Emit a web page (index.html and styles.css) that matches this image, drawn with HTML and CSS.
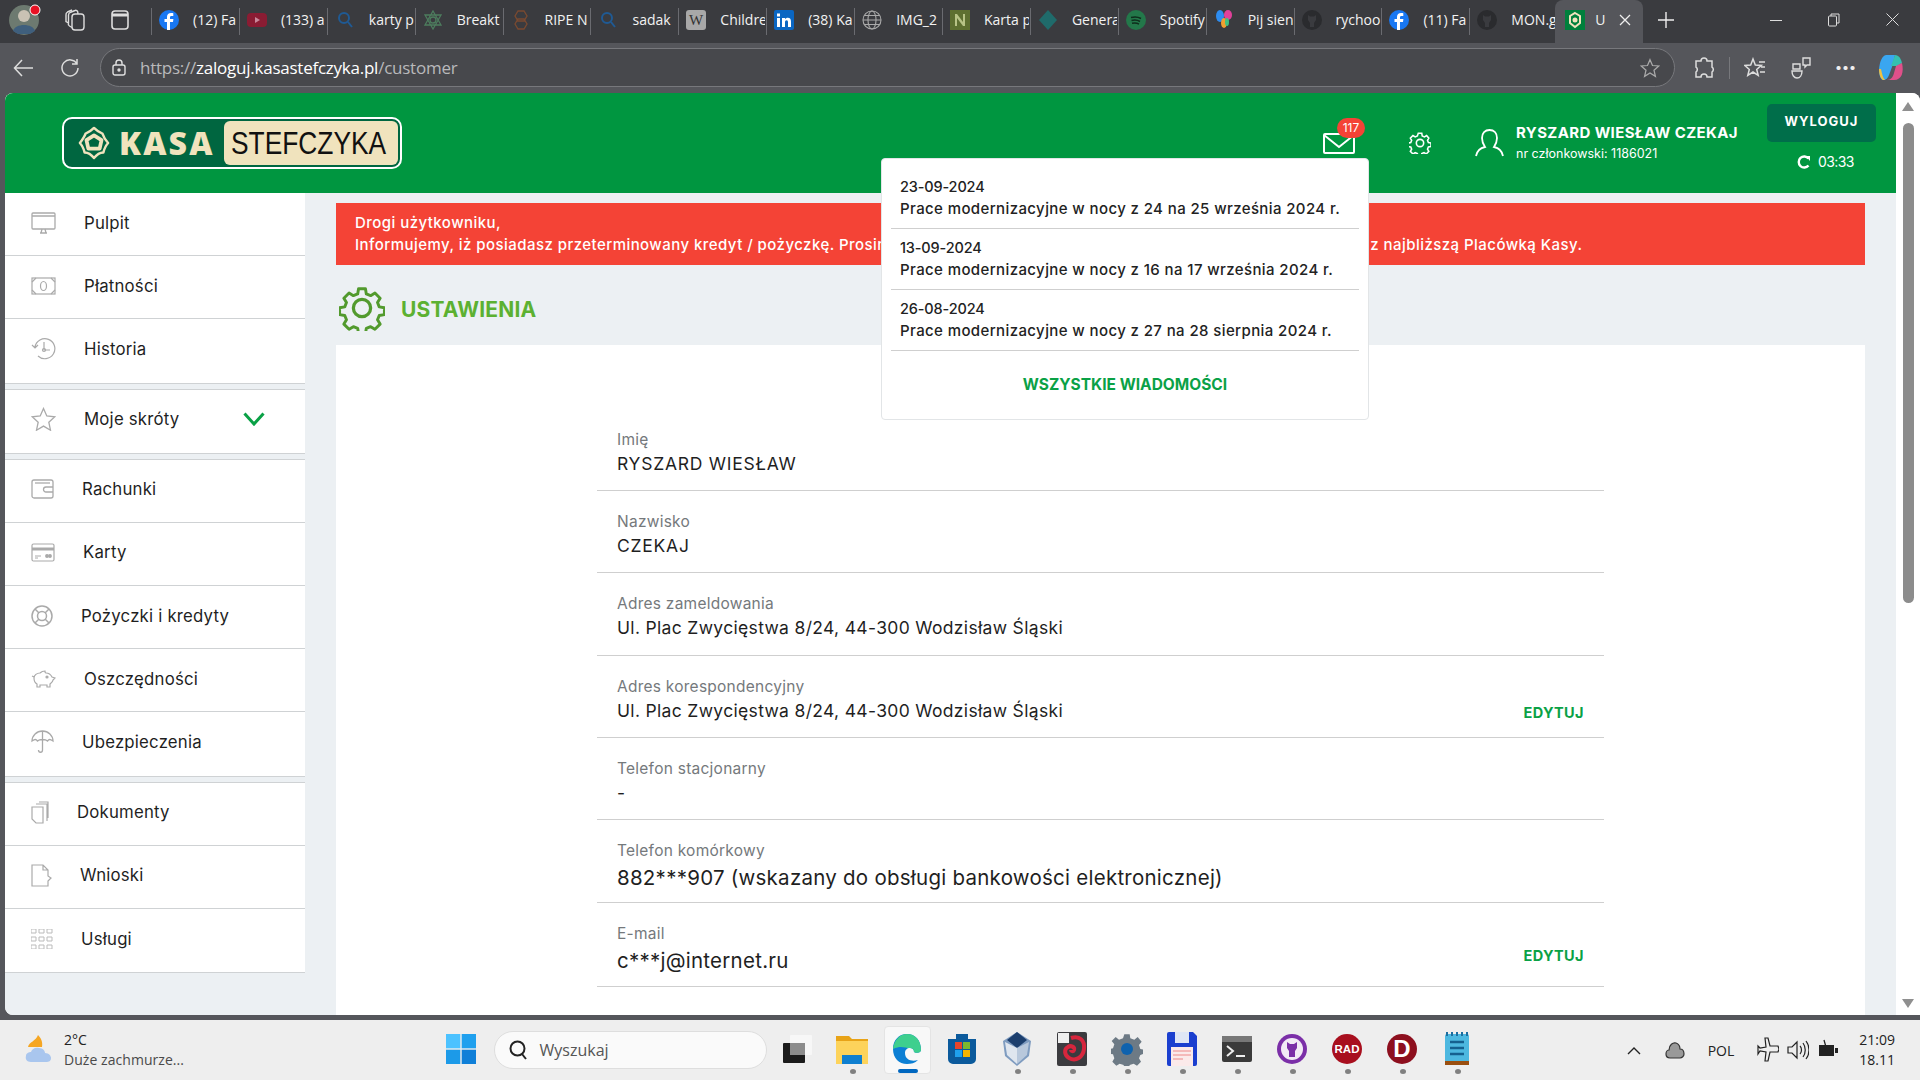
FILE: index.html
```html
<!DOCTYPE html>
<html lang="pl">
<head>
<meta charset="utf-8">
<title>Ustawienia</title>
<link rel="stylesheet" href="styles.css">
</head>
<body>
<div class="tabstrip">
  <div class="strip-btn avatar-box">
    <svg width="32" height="32" viewBox="0 0 32 32"><circle cx="15" cy="16" r="15" fill="#6d7a70"/><circle cx="15" cy="12" r="6" fill="#c9c2b4"/><path d="M4 27c2-8 20-8 22 0l-5 3H9z" fill="#3f5f7d"/><circle cx="26" cy="6" r="5" fill="#e81123" stroke="#fff" stroke-width="1"/></svg>
  </div>
  <div class="strip-btn btn-wide">
    <svg width="22" height="24" viewBox="0 0 22 24" fill="none" stroke="#ddd" stroke-width="1.400"><rect x="8" y="6" width="12" height="16" rx="3"/><path d="M8 19.500 5.500 18A2.500 2.500 0 0 1 4.500 15V7a3 3 0 0 1 1.500-2.500L11 2.500a2 2 0 0 1 2.800 1.500V6"/><path d="M4.500 15 2 13.500V7A3 3 0 0 1 3.500 4L8 2"/></svg>
  </div>
  <div class="strip-btn btn-narrow">
    <svg width="20" height="22" viewBox="0 0 20 22" fill="none" stroke="#ddd" stroke-width="1.600"><rect x="2" y="2" width="16" height="18" rx="3"/><path d="M2 6h16" stroke-width="3"/></svg>
  </div>
  <div class="tabs">
    <div class="tab"><svg class="fav" viewBox="0 0 20 20"><circle cx="10" cy="10" r="10" fill="#1877f2"/><path d="M11 20v-8h3l.4-3H11V7.400c0-1 .4-1.500 1.600-1.500h1.700V3.200C13.800 3.100 13 3 12.100 3 9.600 3 8 4.500 8 7v2H5.500v3H8v8z" fill="#fff"/></svg><span class="tab-text">(12) Fa</span></div>
    <div class="tab"><svg class="fav" viewBox="0 0 20 20"><rect y="3" width="20" height="14" rx="4" fill="#8a1c33"/><path d="M8 7l5 3-5 3z" fill="#c8889a"/></svg><span class="tab-text">(133) a</span></div>
    <div class="tab"><svg class="fav" viewBox="0 0 20 20" fill="none" stroke="#1f5a94" stroke-width="2"><circle cx="9" cy="8" r="5"/><path d="M13 12l4 5"/></svg><span class="tab-text">karty p</span></div>
    <div class="tab"><svg class="fav" viewBox="0 0 20 20" fill="none" stroke="#4d7d5e" stroke-width="1.300"><path d="M10 1l8 14H2zM10 19L2 5h16z"/><circle cx="10" cy="10" r="3"/></svg><span class="tab-text">Breakt</span></div>
    <div class="tab"><svg class="fav" viewBox="0 0 20 20" fill="none" stroke="#7a4a30" stroke-width="1.300"><path d="M7 1h6l3 5-3 5H7L4 6zM7 9h6l3 5-3 5H7l-3-5z"/></svg><span class="tab-text">RIPE N</span></div>
    <div class="tab"><svg class="fav" viewBox="0 0 20 20" fill="none" stroke="#1f5a94" stroke-width="2"><circle cx="9" cy="8" r="5"/><path d="M13 12l4 5"/></svg><span class="tab-text">sadak</span></div>
    <div class="tab"><svg class="fav" viewBox="0 0 20 20"><rect width="20" height="20" rx="3" fill="#a8a8a8"/><text x="10" y="15" text-anchor="middle" class="fav-w">W</text></svg><span class="tab-text">Childre</span></div>
    <div class="tab"><svg class="fav" viewBox="0 0 20 20"><rect width="20" height="20" rx="2" fill="#0a66c2"/><path d="M3 8h3v9H3zM3 3.500h3v3H3zM8 8h3v1.300c.6-1 1.600-1.500 2.800-1.500 2.300 0 3.200 1.500 3.200 4V17h-3v-4.700c0-1.300-.4-2-1.400-2-1.100 0-1.600.8-1.600 2V17H8z" fill="#fff"/></svg><span class="tab-text">(38) Ka</span></div>
    <div class="tab"><svg class="fav" viewBox="0 0 20 20" fill="none" stroke="#aaa" stroke-width="1.100"><circle cx="10" cy="10" r="9"/><ellipse cx="10" cy="10" rx="4" ry="9"/><path d="M1 10h18M2.500 5.500h15M2.500 14.500h15"/></svg><span class="tab-text">IMG_2</span></div>
    <div class="tab"><svg class="fav" viewBox="0 0 20 20"><rect width="20" height="20" fill="#5e7030"/><path d="M5 16V4h2l6 8V4h2v12h-2L7 8v8z" fill="#b8c486"/></svg><span class="tab-text">Karta p</span></div>
    <div class="tab"><svg class="fav" viewBox="0 0 20 20"><path d="M10 0l9 10-9 10-9-10z" fill="#1f6b6b"/></svg><span class="tab-text">Genera</span></div>
    <div class="tab"><svg class="fav" viewBox="0 0 20 20"><circle cx="10" cy="10" r="10" fill="#23784a"/><path d="M5 7.500c4-1 7-.7 10 1M5.500 10.500c3.500-.8 6-.5 8.500 1M6 13.300c3-.6 5-.4 7 .8" fill="none" stroke="#0e2e1c" stroke-width="1.500"/></svg><span class="tab-text">Spotify</span></div>
    <div class="tab"><svg class="fav" viewBox="0 0 20 20"><ellipse cx="6" cy="6" rx="4" ry="6" fill="#2d8cf0"/><ellipse cx="14" cy="5" rx="4" ry="5" fill="#e0409a"/><ellipse cx="10" cy="13" rx="3" ry="5" fill="#f0a030"/><ellipse cx="13" cy="12" rx="2" ry="4" fill="#40c080"/></svg><span class="tab-text">Pij sien</span></div>
    <div class="tab"><svg class="fav" viewBox="0 0 20 20"><circle cx="10" cy="10" r="10" fill="#2a2b2e"/><path d="M6 5l2 1.500h4L14 5v5l-2 3v4H8v-4l-2-3z" fill="#3a3b3f"/></svg><span class="tab-text">rychoo</span></div>
    <div class="tab"><svg class="fav" viewBox="0 0 20 20"><circle cx="10" cy="10" r="10" fill="#1877f2"/><path d="M11 20v-8h3l.4-3H11V7.400c0-1 .4-1.500 1.600-1.500h1.700V3.200C13.800 3.100 13 3 12.100 3 9.600 3 8 4.500 8 7v2H5.500v3H8v8z" fill="#fff"/></svg><span class="tab-text">(11) Fa</span></div>
    <div class="tab"><svg class="fav" viewBox="0 0 20 20"><circle cx="10" cy="10" r="10" fill="#2a2b2e"/><path d="M6 5l2 1.500h4L14 5v5l-2 3v4H8v-4l-2-3z" fill="#3a3b3f"/></svg><span class="tab-text">MON.g</span></div>
    <div class="tab tab-active"><svg class="fav" viewBox="0 0 20 20"><rect width="20" height="20" fill="#00803c"/><path d="M10 3l5 3v7l-5 4-5-4V6z" fill="none" stroke="#f0e3bd" stroke-width="2"/><circle cx="10" cy="10" r="2.500" fill="#f0e3bd"/></svg><span class="tab-text tab-text-short">U</span><svg class="tab-x" width="12" height="12" viewBox="0 0 12 12" stroke="#eee" stroke-width="1.300"><path d="M1 1l10 10M11 1 1 11"/></svg></div>
  </div>
  <svg class="tab-plus" width="16" height="16" viewBox="0 0 16 16" stroke="#eee" stroke-width="1.400"><path d="M8 0v16M0 8h16"/></svg>
  <div class="win-controls">
    <svg width="12" height="12" viewBox="0 0 12 12" stroke="#ddd"><path d="M0 6.500h12"/></svg>
    <svg width="12" height="14" viewBox="0 0 12 14" fill="none" stroke="#ddd"><rect x=".5" y="3" width="8" height="10" rx="1"/><path d="M3 3V1h8v9H9"/></svg>
    <svg width="13" height="13" viewBox="0 0 13 13" stroke="#ddd"><path d="M.5.500l12 12M12.500.500l-12 12"/></svg>
  </div>
</div>

<div class="toolbar">
  <div class="tool-btn"><svg width="20" height="18" viewBox="0 0 20 18" fill="none" stroke="#ddd" stroke-width="1.500"><path d="M20 9H2M9 1 1.500 9 9 17"/></svg></div>
  <div class="tool-btn"><svg width="20" height="20" viewBox="0 0 20 20" fill="none" stroke="#ddd" stroke-width="1.500"><path d="M17 6a8 8 0 1 0 1 4M17 1v5h-5"/></svg></div>
  <div class="address">
    <span class="lock"><svg width="14" height="17" viewBox="0 0 14 17" fill="none" stroke="#e0e0e0" stroke-width="1.400"><rect x="1" y="6" width="12" height="10" rx="2"/><path d="M4 6V4a3 3 0 0 1 6 0v2"/><circle cx="7" cy="11" r="1" fill="#e0e0e0"/></svg></span>
    <span class="url"><span class="url-dim">https://</span>zaloguj.kasastefczyka.pl<span class="url-dim">/customer</span></span>
    <svg class="addr-star" width="20" height="20" viewBox="0 0 24 24" fill="none" stroke="#aaa" stroke-width="1.500"><path d="M12 2l3 7 7.500.6-5.700 5 1.700 7.400L12 18l-6.500 4 1.700-7.400-5.700-5L9 9z"/></svg>
  </div>
  <div class="tool-right">
    <div class="tool-ic"><svg width="22" height="22" viewBox="0 0 22 22" fill="none" stroke="#ddd" stroke-width="1.500"><path d="M8 4a3 3 0 0 1 6 0h5v6a3 3 0 0 1 0 5v5h-5a3 3 0 0 0-6 0H3v-5a3 3 0 0 0 0-5V4z"/></svg></div>
    <span class="tool-sep"></span>
    <div class="tool-ic"><svg width="22" height="22" viewBox="0 0 22 22" fill="none" stroke="#ddd" stroke-width="1.500"><path d="M9 2l2.300 6 6 .4-4.600 4 1.500 6L9 15l-5.200 3.400 1.500-6-4.600-4 6-.4zM15 5h6M17 10h4M16 15h5"/></svg></div>
    <div class="tool-ic"><svg width="22" height="24" viewBox="0 0 22 24" fill="none" stroke="#ddd" stroke-width="1.400"><path d="M13 2h7v7h-3l-2 2V9h-2zM3 8h7v5H3zM2 15h10c0 4-2 7-5 7s-5-3-5-7z"/></svg></div>
    <div class="tool-ic tool-dots">&#183;&#183;&#183;</div>
    <div class="tool-ic"><svg width="26" height="28" viewBox="0 0 26 28"><path d="M8 1h9l-3 12-3 8c-1 3-3 5-6 5C3 26 1 22 1 15 2 7 4 2 8 1z" fill="#3aa6f0"/><path d="M17 1c4 0 6 4 7 8l-5 3h-6z" fill="#35c0b0"/><path d="M24 9c2 9 0 17-8 17H9c4 0 6-3 7-7l2-7z" fill="#e0508a"/><path d="M3 15c1 5 2 9 4 11H5C2 24 1 19 1 15z" fill="#f0c040"/></svg></div>
  </div>
</div>

<div class="browser">
  <div class="page">
    <div class="app">
      <header class="header">
        <div class="logo">
          <div class="logo-dark">
            <svg class="logo-mark" width="32" height="34" viewBox="0 0 34 36" fill="none" stroke="#f0e3bd" stroke-width="2.600" stroke-linejoin="round"><path d="M17 2c3 3 6 5 9 6 1 3 2 6 6 10-3 3-4 6-5 10-4 0-7 2-10 6-3-4-6-6-10-6-1-4-2-7-5-10 3-4 5-7 6-10 3-1 6-3 9-6z"/><path d="M17 10l8 5-2 9h-12l-2-9z" stroke-width="4"/></svg>
            <span class="logo-kasa">KASA</span>
          </div>
          <div class="logo-light"><span class="logo-stef">STEFCZYKA</span></div>
        </div>
        <div class="head-right">
          <div class="mail">
            <svg width="32" height="21" viewBox="0 0 32 21" fill="none" stroke="#fff" stroke-width="2"><rect x="1" y="1" width="30" height="19" rx="1"/><path d="M1 2l15 12L31 2"/></svg>
            <span class="badge">117</span>
          </div>
          <svg class="head-gear" width="22" height="22" viewBox="0 0 48 48" fill="none" stroke="#fff" stroke-width="3.500"><path d="M20 3h8l1 6 5 2 5-3 5 6-3 5 2 5 6 1v8l-6 1-2 5 3 5-6 6-5-3-5 2-1 6h-8l-1-6-5-2-5 3-6-6 3-5-2-5-6-1v-8l6-1 2-5-3-5 6-6 5 3 5-2z" transform="translate(1 0) scale(.96)"/><circle cx="24" cy="24" r="8"/></svg>
          <svg class="head-user" width="29" height="28" viewBox="0 0 29 28" fill="none" stroke="#fff" stroke-width="1.800"><path d="M1 27c1-5 4-8 9-9-2-3-3-6-3-9 0-5 3-8 7.500-8S22 4 22 9c0 3-1 6-3 9 5 1 8 4 9 9"/></svg>
          <div class="user-info">
            <div class="user-name">RYSZARD WIESŁAW CZEKAJ</div>
            <div class="user-no">nr członkowski: 1186021</div>
          </div>
          <div class="session">
            <div class="logout">WYLOGUJ</div>
            <div class="timer"><svg width="14" height="14" viewBox="0 0 14 14" fill="none" stroke="#fff" stroke-width="2.400"><path d="M11.500 3.500a5.500 5.500 0 1 0 0 7"/><path d="M9 1l4 0 0 5z" fill="#fff" stroke="none"/></svg><span>03:33</span></div>
          </div>
        </div>
        <div class="popup">
          <div class="msg"><div class="msg-date">23-09-2024</div><div>Prace modernizacyjne w nocy z 24 na 25 września 2024 r.</div></div>
          <div class="msg"><div class="msg-date">13-09-2024</div><div>Prace modernizacyjne w nocy z 16 na 17 września 2024 r.</div></div>
          <div class="msg"><div class="msg-date">26-08-2024</div><div>Prace modernizacyjne w nocy z 27 na 28 sierpnia 2024 r.</div></div>
          <div class="popup-all">WSZYSTKIE WIADOMOŚCI</div>
        </div>
      </header>
      <div class="body-row">
        <nav class="sidebar">
          <div class="nav-group">
            <div class="nav-item"><svg width="25" height="22" viewBox="0 0 25 22" fill="none" stroke="#aaa" stroke-width="1.300"><rect x="1" y="1" width="23" height="16" rx="1"/><path d="M1 4h23M9 21h7M11 17l-1 4M14 17l1 4" /></svg><span>Pulpit</span></div>
            <div class="nav-item"><svg width="25" height="18" viewBox="0 0 25 18" fill="none" stroke="#aaa" stroke-width="1.200"><rect x="1" y="1" width="23" height="16"/><path d="M1 5l4-4M20 1l4 4M1 13l4 4M24 13l-4 4"/><ellipse cx="12.500" cy="9" rx="3" ry="4.500"/></svg><span>Płatności</span></div>
            <div class="nav-item"><svg width="25" height="22" viewBox="0 0 25 22" fill="none" stroke="#aaa" stroke-width="1.200"><path d="M4 9a10 10 0 1 1 3 9M1 7l3 3 3-3M13 4v8h6"/><circle cx="13" cy="12" r="1.500"/></svg><span>Historia</span></div>
          </div>
          <div class="nav-group">
            <div class="nav-item nav-expand"><svg width="25" height="24" viewBox="0 0 25 24" fill="none" stroke="#aaa" stroke-width="1.300"><path d="M12.500 1.500l3.300 7.500 8 .8-6 5.400 1.700 8-7-4.100-7 4.100 1.700-8-6-5.400 8-.8z"/></svg><span>Moje skróty</span><svg class="chevron" width="22" height="14" viewBox="0 0 22 14" fill="none" stroke="#0aa146" stroke-width="3"><path d="M1.500 1.500 11 12l9.500-10.500"/></svg></div>
          </div>
          <div class="nav-group">
            <div class="nav-item"><svg width="23" height="20" viewBox="0 0 23 20" fill="none" stroke="#aaa" stroke-width="1.300"><path d="M3 1h17a2 2 0 0 1 2 2v14a2 2 0 0 1-2 2H3a2 2 0 0 1-2-2V3a2 2 0 0 1 2-2zM22 8h-7a2 2 0 0 0 0 5h7"/><path d="M4 4h15"/></svg><span>Rachunki</span></div>
            <div class="nav-item"><svg width="24" height="19" viewBox="0 0 24 19" fill="none" stroke="#aaa" stroke-width="1.200"><rect x="1" y="1" width="22" height="17" rx="1.500"/><path d="M1 6h22" stroke-width="3"/><path d="M4 13h6M4 15h3" stroke-width="1"/><circle cx="16" cy="13" r="1.300" fill="#aaa"/><circle cx="19" cy="13" r="1.300" fill="#aaa"/></svg><span>Karty</span></div>
            <div class="nav-item"><svg width="22" height="22" viewBox="0 0 22 22" fill="none" stroke="#aaa" stroke-width="1.500"><circle cx="11" cy="11" r="10"/><circle cx="11" cy="11" r="4.500"/><path d="M4 4l4 4M18 4l-4 4M4 18l4-4M18 18l-4-4"/></svg><span>Pożyczki i kredyty</span></div>
            <div class="nav-item"><svg width="25" height="21" viewBox="0 0 25 21" fill="none" stroke="#aaa" stroke-width="1.200"><path d="M3 10c0-3 3-5 6-5 1-1 3-2 5-2 0 1 0 2 1 2 3 0 5 2 6 4l3 1-2 2c0 2-2 3-3 4v3h-3v-2H9v2H6v-3c-2-1-3-3-3-6zM3 9 1 8"/><circle cx="16" cy="9" r="1" fill="#aaa"/></svg><span>Oszczędności</span></div>
            <div class="nav-item"><svg width="23" height="24" viewBox="0 0 23 24" fill="none" stroke="#aaa" stroke-width="1.300"><path d="M1 11a10.500 10 0 0 1 21 0c-3-2-4-2-5.500 0-2-2-8-2-10 0C5 9 4 9 1 11zM11.500 1v19c0 3-4 3-4 0"/></svg><span>Ubezpieczenia</span></div>
          </div>
          <div class="nav-group">
            <div class="nav-item"><svg width="18" height="23" viewBox="0 0 18 23" fill="none" stroke="#aaa" stroke-width="1.200"><path d="M1 6h11v16H5l-4-4zM5 3h11v17M8 1h9v16"/></svg><span>Dokumenty</span></div>
            <div class="nav-item"><svg width="21" height="23" viewBox="0 0 21 23" fill="none" stroke="#aaa" stroke-width="1.200"><path d="M1 1h11l5 5v6l3 2-3 3v5H1zM12 1v5h5"/></svg><span>Wnioski</span></div>
            <div class="nav-item"><svg width="22" height="20" viewBox="0 0 22 20"><path d="M0 0h5v4H0zM8 0h5v4H8zM16 0h5v4h-5zM0 8h5v4H0zM8 8h5v4H8zM16 8h5v4h-5zM0 16h5v4H0zM8 16h5v4H8zM16 16h5v4h-5z" fill="none" stroke="#bbb"/></svg><span>Usługi</span></div>
          </div>
        </nav>
        <main class="main">
          <div class="alert">
            <div>Drogi użytkowniku,</div>
            <div>Informujemy, iż posiadasz przeterminowany kredyt / pożyczkę. Prosimy o szybkie uregulowanie zaległości lub o bezpośredni kontakt z najbliższą Placówką Kasy.</div>
          </div>
          <div class="page-title">
            <svg width="46" height="46" viewBox="0 0 48 48" fill="none" stroke="#529a2d" stroke-width="3.400" stroke-linejoin="round"><path d="M20 3h8l1 6 5 2 5-3 6 6-3 5 2 5 6 1v8l-6 1-2 5 3 5-6 6-5-3-5 2-1 6h-8l-1-6-5-2-5 3-6-6 3-5-2-5-6-1v-8l6-1 2-5-3-5 6-6 5 3 5-2z" transform="translate(2.400 1.200) scale(.9)"/><circle cx="24" cy="24" r="9"/></svg>
            <h1>USTAWIENIA</h1>
          </div>
          <section class="card">
            <div class="row"><div><div class="row-label">Imię</div><div class="row-value row-caps">RYSZARD WIESŁAW</div></div></div>
            <div class="row"><div><div class="row-label">Nazwisko</div><div class="row-value row-caps">CZEKAJ</div></div></div>
            <div class="row"><div><div class="row-label">Adres zameldowania</div><div class="row-value">Ul. Plac Zwycięstwa 8/24, 44-300 Wodzisław Śląski</div></div></div>
            <div class="row"><div><div class="row-label">Adres korespondencyjny</div><div class="row-value">Ul. Plac Zwycięstwa 8/24, 44-300 Wodzisław Śląski</div></div><span class="row-edit">EDYTUJ</span></div>
            <div class="row"><div><div class="row-label">Telefon stacjonarny</div><div class="row-value">-</div></div></div>
            <div class="row row-big"><div><div class="row-label">Telefon komórkowy</div><div class="row-value">882***907 (wskazany do obsługi bankowości elektronicznej)</div></div></div>
            <div class="row row-big"><div><div class="row-label">E-mail</div><div class="row-value">c***j@internet.ru</div></div><span class="row-edit">EDYTUJ</span></div>
          </section>
        </main>
      </div>
    </div>
    <div class="scrollbar">
      <span class="arrow-up"></span>
      <span class="thumb"></span>
      <span class="arrow-down"></span>
    </div>
  </div>
</div>

<footer class="taskbar">
  <div class="weather">
    <svg width="32" height="32" viewBox="0 0 32 32"><path d="M14 1c3 3 5 7 4 12H4C5 8 12 7 14 1z" fill="#f5a623"/><path d="M7 28c-4 0-6-3-5-6 0-3 3-4 5-4 1-3 4-5 8-4 4 0 6 3 6 5 4 0 6 3 6 5 0 3-2 4-5 4z" fill="#a9c6ee"/></svg>
    <div class="weather-text"><div>2°C</div><div class="weather-sub">Duże zachmurze...</div></div>
  </div>
  <div class="task-center">
    <div class="task-ic"><svg width="30" height="30" viewBox="0 0 30 30"><rect width="14.300" height="14.300" fill="#4cc2ff"/><rect x="15.700" width="14.300" height="14.300" fill="#1fa0ee"/><rect y="15.700" width="14.300" height="14.300" fill="#1c9ae8"/><rect x="15.700" y="15.700" width="14.300" height="14.300" fill="#0f7fd8"/></svg></div>
    <div class="search">
      <svg width="19" height="20" viewBox="0 0 19 20" fill="none" stroke="#222" stroke-width="2"><circle cx="8.500" cy="8.500" r="7"/><path d="M13 14l4 5"/></svg>
      <span>Wyszukaj</span>
    </div>
    <div class="task-ic"><svg width="30" height="30" viewBox="0 0 30 30"><rect x="1" y="9" width="22" height="20" rx="1" fill="#1b1b1b"/><rect x="8" y="1" width="22" height="20" rx="1" fill="#f7f7f7"/><rect x="8" y="9" width="15" height="12" fill="#8c8c8c"/></svg></div>
    <div class="task-ic run"><svg width="32" height="30" viewBox="0 0 32 30"><path d="M0 2h13l3 3h16v25H0z" fill="#e8a317"/><rect y="7" width="32" height="23" fill="#fdd35b"/><rect x="6" y="21" width="20" height="9" fill="#0f7fd0"/></svg></div>
    <div class="task-ic task-active"><svg width="30" height="32" viewBox="0 0 30 32"><path d="M29 17C29 7 23 1 15 1 7 1 1 7 1 16c0 9 6 15 14 15 4 0 8-1 11-4-6 2-13 0-13-7 0-3 2-5 5-5 2 0 4 1 4 4 4 2 7 0 7-2z" fill="#0c7fd4"/><path d="M1 16C2 7 8 1 15 1c8 0 14 6 14 16 0 2-3 4-7 2 0-3-2-4-4-4-5 0-9-3-17 1z" fill="#3ecf8e"/></svg><span class="active-bar"></span></div>
    <div class="task-ic"><svg width="30" height="30" viewBox="0 0 30 30"><path d="M9 0h12v5h8v20a5 5 0 0 1-5 5H6a5 5 0 0 1-5-5V5h8z" fill="#0b5a9c"/><rect x="8" y="8" width="7" height="7" fill="#e8452b"/><rect x="16" y="8" width="7" height="7" fill="#7cb82f"/><rect x="8" y="16" width="7" height="7" fill="#1fa0ee"/><rect x="16" y="16" width="7" height="7" fill="#f5b400"/></svg></div>
    <div class="task-ic run"><svg width="28" height="34" viewBox="0 0 28 34"><path d="M14 0l14 9-2 15-12 10L2 24 0 9z" fill="#7f9cc0"/><path d="M14 0l10 8-10 8L4 8z" fill="#1c3f6e"/><path d="M14 16v16L4 23 2 10z" fill="#dfe6ef"/><path d="M14 16v16l10-9 2-13z" fill="#b8c8dc"/></svg></div>
    <div class="task-ic run"><svg width="30" height="34" viewBox="0 0 30 34"><rect width="30" height="34" rx="2" fill="#3b3b3f"/><rect x="1" y="1" width="11" height="10" fill="#eee"/><path d="M14 6c9-3 14 3 13 11s-8 13-15 9c-5-3-5-9-1-11 3-2 7 0 6 3-1 2-3 1-3 0" fill="none" stroke="#d7263d" stroke-width="4"/></svg></div>
    <div class="task-ic run"><svg width="32" height="34" viewBox="0 0 48 48" fill="#6d7a85"><path d="M20 2h8l1 6 6 2 5-4 6 7-4 5 2 6 6 1v6l-6 2-2 5 3 5-6 6-5-3-6 2-1 5h-7l-1-5-6-2-5 3-6-6 3-5-2-6-6-1v-7l6-1 2-6-4-5 6-6 5 4 6-2z"/><circle cx="24" cy="24" r="9" fill="#0f62ae"/></svg></div>
    <div class="task-ic run"><svg width="30" height="34" viewBox="0 0 30 34"><path d="M0 2a2 2 0 0 1 2-2h24l4 4v28a2 2 0 0 1-2 2H2a2 2 0 0 1-2-2z" fill="#1b3fcf"/><rect x="8" y="0" width="14" height="11" fill="#dfe6f5"/><rect x="4" y="15" width="22" height="19" fill="#fbeaea"/><path d="M6 19h18M6 23h18M6 27h10" stroke="#e88"/></svg></div>
    <div class="task-ic run"><svg width="30" height="26" viewBox="0 0 30 26"><rect width="30" height="26" rx="2" fill="#3a3a3a"/><rect width="30" height="6" fill="#777"/><path d="M5 10l6 5-6 5" fill="none" stroke="#eee" stroke-width="2"/><path d="M14 20h9" stroke="#eee" stroke-width="2"/></svg></div>
    <div class="task-ic run"><svg width="30" height="30" viewBox="0 0 30 30"><circle cx="15" cy="15" r="15" fill="#7b2fa8"/><circle cx="15" cy="15" r="11" fill="#f2eaf6"/><path d="M10 8l3 2h4l3-2v6l-2 3v6h-6v-6l-2-3z" fill="#7b2fa8"/></svg></div>
    <div class="task-ic run"><div class="rad-ic">RAD</div></div>
    <div class="task-ic run"><div class="d-ic">D</div></div>
    <div class="task-ic run"><svg width="24" height="34" viewBox="0 0 24 34"><rect y="2" width="24" height="30" rx="2" fill="#4db8e0"/><rect y="29" width="24" height="4" fill="#9a4f10"/><path d="M2 0v4M7 0v4M12 0v4M17 0v4M22 0v4" stroke="#1c6ea0" stroke-width="2"/><path d="M5 10h14M5 16h14M5 22h14" stroke="#15608f" stroke-width="2.500"/></svg></div>
  </div>
  <div class="tray">
    <svg width="14" height="9" viewBox="0 0 14 9" fill="none" stroke="#222" stroke-width="1.400"><path d="M1 8l6-6 6 6"/></svg>
    <svg class="tray-cloud" width="20" height="20" viewBox="0 0 20 20" fill="#999" stroke="#333" stroke-width="1.200"><path d="M5 18c-3 0-4-2-4-4 0-3 2-4 3-4 0-5 4-8 7-7 3 1 4 3 4 6 3 0 4 2 4 5 0 2-2 4-4 4z"/></svg>
    <span class="tray-lang">POL</span>
    <svg width="22" height="26" viewBox="0 0 22 26" fill="none" stroke="#222" stroke-width="1.200"><path d="M8 1h3l2 8h8l1 3-1 3h-8l-2 9H8l1-9-6-1-2 3V9l2 2 6-1z"/></svg>
    <svg width="22" height="22" viewBox="0 0 22 22" fill="none" stroke="#222" stroke-width="1.200"><path d="M1 8h4l5-5v16l-5-5H1zM13 7c2 2 2 6 0 8M16 4c3 4 3 10 0 14M19 2c4 5 4 13 0 18"/></svg>
    <svg width="22" height="22" viewBox="0 0 22 22"><path d="M2 6h15v11H2z" fill="#222"/><path d="M18 9h3v5h-3z" fill="#222"/><path d="M7 1l2 7-3 4h4l-1 3" fill="none" stroke="#222" stroke-width="1.300"/></svg>
    <div class="clock"><div>21:09</div><div>18.11</div></div>
  </div>
</footer>
</body>
</html>
```

FILE: styles.css
```css
* { box-sizing: border-box; }
html, body { margin: 0; padding: 0; }
body {
  width: 1920px;
  height: 1080px;
  overflow: hidden;
  display: flex;
  flex-direction: column;
  background: #3a3b3f;
  font-family: "Inter", "Liberation Sans", sans-serif;
  color: #1f1f1f;
}

/* browser chrome */
.tabstrip {
  height: 43px;
  flex: none;
  display: flex;
  align-items: center;
  background: #3a3b3f;
  color: #f2f2f2;
  font-family: "Open Sans", sans-serif;
  font-size: 14px;
  padding-bottom: 4px;
}
.strip-btn { display: flex; align-items: center; justify-content: center; }
.avatar-box { width: 50px; }
.btn-wide { width: 50px; }
.btn-narrow { width: 40px; margin-right: 11px; }
.tabs { display: flex; height: 100%; align-items: center; }
.tab {
  position: relative;
  width: 87.900px;
  height: 100%;
  display: flex;
  align-items: center;
  padding-left: 8px;
  overflow: hidden;
}
.tab::before {
  content: "";
  position: absolute;
  left: 0;
  top: 8px;
  bottom: 4px;
  width: 1px;
  background: #6a6b70;
}
.fav { width: 20px; height: 20px; flex: none; margin-right: 14px; }
.fav-w { font-family: "Liberation Serif", serif; font-size: 15px; fill: #333; }
.tab-text { width: 45px; overflow: hidden; white-space: nowrap; flex: none; }
.tab-text-short { width: 18px; }
.tab-active {
  background: #55565b;
  border-radius: 8px 8px 0 0;
  padding-left: 10px;
  margin-left: -2px;
  height: calc(100% + 4px);
  align-self: flex-start;
  padding-bottom: 4px;
}
.tab-active::before { display: none; }
.tab-active .fav { margin-right: 10px; }
.tab-x { flex: none; margin-left: 6px; }
.tab-plus { margin-left: 15px; }
.win-controls { margin-left: auto; display: flex; align-items: center; gap: 46px; padding-right: 21px; }

.toolbar {
  height: 50px;
  flex: none;
  display: flex;
  align-items: center;
  background: #55565b;
  padding-bottom: 1px;
}
.tool-btn { width: 46.500px; display: flex; justify-content: center; align-items: center; }
.address {
  width: 1575px;
  margin-left: 7px;
  height: 39px;
  border: 1px solid #77787c;
  border-radius: 20px;
  background: #47484c;
  display: flex;
  align-items: center;
  padding-left: 11px;
  padding-right: 14px;
  font-family: "Open Sans", sans-serif;
  font-size: 17px;
  color: #fff;
  flex: none;
}
.lock { width: 28px; display: flex; }
.url { letter-spacing: -.24px; }
.url-dim { color: #b9b9bb; }
.addr-star { margin-left: auto; }
.tool-right { display: flex; align-items: center; margin-left: 6px; }
.tool-ic { width: 46px; display: flex; justify-content: center; align-items: center; }
.tool-sep { width: 1px; height: 22px; background: #77787c; margin: 0 2px; }
.tool-dots { color: #eee; font-size: 24px; font-weight: 700; line-height: 1; letter-spacing: -1px; margin-left: -2px; }

.browser {
  flex: none;
  height: 927px;
  padding: 0 0 5px 5px;
  background: #55565b;
}
.page {
  height: 100%;
  display: flex;
  border-radius: 8px 8px 0 8px;
  overflow: hidden;
  background: #fff;
}
.app { flex: 1; min-width: 0; display: flex; flex-direction: column; background: #ecf0f3; }

/* header */
.header {
  position: relative;
  height: 100px;
  flex: none;
  background: #009640;
  display: flex;
  align-items: center;
  color: #fff;
  padding-left: 57px;
  padding-right: 20px;
}
.logo {
  width: 340px;
  height: 52px;
  padding: 2px;
  display: flex;
  background: #006640;
  border: 2px solid #fff;
  border-radius: 10px;
}
.logo-dark { width: 158px; display: flex; align-items: center; padding-left: 12px; gap: 9px; }
.logo-mark { flex: none; }
.logo-kasa { font-family: "Open Sans", sans-serif; font-weight: 800; font-size: 32px; letter-spacing: 2.200px; color: #f0e3bd; line-height: 1; }
.logo-light { flex: 1; background: #f0e3bd; border-radius: 6px; display: flex; align-items: center; padding-left: 7px; overflow: hidden; }
.logo-stef { font-family: "Liberation Sans", sans-serif; font-size: 31px; color: #111; line-height: 1; transform: scaleX(.85); transform-origin: left center; white-space: nowrap; }
.head-right { margin-left: auto; display: flex; align-items: center; height: 100%; }
.mail { position: relative; display: flex; margin-right: 54px; }
.badge {
  position: absolute;
  left: 14px;
  top: -15px;
  width: 28px;
  height: 20px;
  border-radius: 10px;
  background: #f44336;
  color: #fff;
  font-size: 12px;
  text-align: center;
  line-height: 20px;
}
.head-gear { margin-right: 44px; }
.head-user { margin-right: 12px; }
.user-info { width: 251px; }
.user-name { font-size: 15px; font-weight: 700; line-height: 18px; white-space: nowrap; letter-spacing: .38px; }
.user-no { font-size: 12.500px; line-height: 18px; margin-top: 3px; white-space: nowrap; }
.session { width: 109px; align-self: flex-start; padding-top: 11px; }
.logout {
  height: 38px;
  border-radius: 5px;
  background: #006e4a;
  text-align: center;
  font-size: 13px;
  font-weight: 700;
  letter-spacing: 1px;
  line-height: 35px;
}
.timer { display: flex; align-items: center; gap: 7px; margin-top: 11px; padding-left: 30px; font-size: 14px; letter-spacing: -.6px; line-height: 18px; }

/* popup */
.popup {
  position: absolute;
  left: 876px;
  top: 65px;
  width: 488px;
  height: 262px;
  background: #fff;
  color: #222;
  border-radius: 4px;
  border: 1px solid #e2e5e7;
  padding: 9px 9px 0;
  z-index: 5;
}
.msg {
  height: 61px;
  padding: 8px 9px 0;
  border-bottom: 1px solid #cfcfcf;
  font-size: 15px;
  font-weight: 500;
  line-height: 22px;
  white-space: nowrap;
  letter-spacing: .39px;
}
.msg-date { font-size: 14.500px; letter-spacing: -.15px; }
.popup-all {
  text-align: center;
  color: #0aa146;
  font-size: 15.500px;
  font-weight: 700;
  padding-top: 24px;
  line-height: 20px;
}

/* body */
.body-row { flex: 1; min-height: 0; display: flex; }
.sidebar { width: 300px; flex: none; display: flex; flex-direction: column; gap: 5px; }
.nav-group { background: #fff; border-bottom: 1px solid #cfd2d4; }
.nav-group + .nav-group { border-top: 1px solid #cfd2d4; }
.nav-item {
  height: 63.200px;
  display: flex;
  align-items: center;
  padding-left: 26px;
  padding-bottom: 3px;
  gap: 28px;
  font-size: 16.800px;
  font-weight: 400;
  color: #1f1f1f;
  border-bottom: 1px solid #cfd2d4;
  letter-spacing: .2px;
}
.nav-item:last-child { border-bottom: 0; }
.nav-item svg { flex: none; }
.nav-expand { height: 63px; padding-bottom: 4px; }
.chevron { margin-left: auto; margin-right: 40px; }
.main { flex: 1; min-width: 0; display: flex; flex-direction: column; padding: 10px 31px 0; }
.alert {
  height: 62px;
  flex: none;
  background: #f44336;
  color: #fff;
  font-size: 15px;
  font-weight: 500;
  line-height: 22px;
  padding: 9px 19px 0;
  letter-spacing: .45px;
  white-space: nowrap;
  overflow: hidden;
}
.page-title { height: 80px; flex: none; display: flex; align-items: center; gap: 16px; padding: 6px 0 0 3px; }
.page-title h1 { margin: 0; padding-top: 2px; font-size: 21px; font-weight: 700; color: #5cb131; letter-spacing: .2px; }
.card { flex: 1; min-height: 0; background: #fff; padding: 64px 261px 0 261px; overflow: hidden; }
.row {
  height: 82.200px;
  display: flex;
  justify-content: space-between;
  align-items: flex-start;
  padding: 21px 20px 0;
  border-bottom: 1px solid #cfcfcf;
}
.row-label { font-size: 15.500px; line-height: 20px; color: #75797c; letter-spacing: .25px; }
.row-value { font-size: 17.500px; line-height: 24px; color: #1f1f1f; margin-top: 2px; letter-spacing: .33px; white-space: nowrap; }
.row-caps { letter-spacing: .75px; }
.row-edit { margin-top: 24px; font-size: 14.500px; font-weight: 700; color: #0aa146; letter-spacing: .4px; line-height: 24px; }
.row-big { height: 83.500px; }
.row-big .row-value { font-size: 20.500px; line-height: 28px; margin-top: 3px; letter-spacing: .25px; }
.row-big .row-edit { margin-top: 20px; }

/* scrollbar */
.scrollbar {
  width: 24px;
  flex: none;
  background: #fff;
  display: flex;
  flex-direction: column;
  align-items: center;
  padding: 9px 0 7px;
}
.arrow-up { width: 0; height: 0; border: 6px solid transparent; border-top: 0; border-bottom: 9px solid #8f8f8f; }
.arrow-down { width: 0; height: 0; border: 6px solid transparent; border-bottom: 0; border-top: 9px solid #8f8f8f; margin-top: auto; }
.thumb { width: 11px; height: 480px; margin-top: 12px; background: #8c8c8c; border-radius: 6px; }

/* taskbar */
.taskbar {
  height: 60px;
  flex: none;
  position: relative;
  display: flex;
  align-items: center;
  background: #eeeeee;
  color: #222;
  font-family: "Open Sans", sans-serif;
  font-size: 14px;
}
.weather { width: 433.500px; flex: none; display: flex; align-items: center; padding-left: 24px; gap: 8px; }
.weather-text { line-height: 20px; letter-spacing: .05px; }
.weather-sub { color: #4a4a4a; }
.task-center { display: flex; align-items: center; height: 100%; }
.task-ic {
  position: relative;
  width: 55px;
  height: 100%;
  flex: none;
  display: flex;
  align-items: center;
  justify-content: center;
  padding-bottom: 2px;
}
.run::after {
  content: "";
  position: absolute;
  left: 25px;
  bottom: 6px;
  width: 6px;
  height: 5px;
  border-radius: 50%;
  background: #808080;
}
.task-active::before {
  content: "";
  position: absolute;
  left: 4px;
  right: 4px;
  top: 6px;
  bottom: 6px;
  background: #f8f8f8;
  border: 1px solid #e4e4e4;
  border-radius: 4px;
}
.task-active svg { position: relative; }
.active-bar { position: absolute; left: 18px; bottom: 7px; width: 20px; height: 4px; background: #0067c0; border-radius: 2px; }
.search {
  width: 273px;
  height: 38px;
  margin: 0 3px 0 5px;
  flex: none;
  background: #fafafa;
  border: 1px solid #dedede;
  border-radius: 19px;
  display: flex;
  align-items: center;
  padding-left: 14px;
  gap: 12px;
  font-size: 16px;
  color: #555;
}
.rad-ic {
  width: 30px;
  height: 30px;
  border-radius: 50%;
  background: #a80f1e;
  color: #fff;
  font-family: "Liberation Sans", sans-serif;
  font-size: 11.500px;
  font-weight: 700;
  text-align: center;
  line-height: 30px;
}
.d-ic {
  width: 30px;
  height: 30px;
  border-radius: 50%;
  background: #8d0f1e;
  color: #fff;
  font-family: "Liberation Sans", sans-serif;
  font-size: 24px;
  font-weight: 700;
  text-align: center;
  line-height: 30px;
}
.tray { position: absolute; right: 0; top: 0; height: 100%; display: flex; align-items: center; gap: 8px; padding-right: 25px; }
.tray-cloud { margin-left: 16px; }
.tray-lang { margin: 0 15px 0 15px; font-size: 14px; }
.clock { margin-left: 12px; text-align: center; line-height: 20px; font-size: 14px; }
```
